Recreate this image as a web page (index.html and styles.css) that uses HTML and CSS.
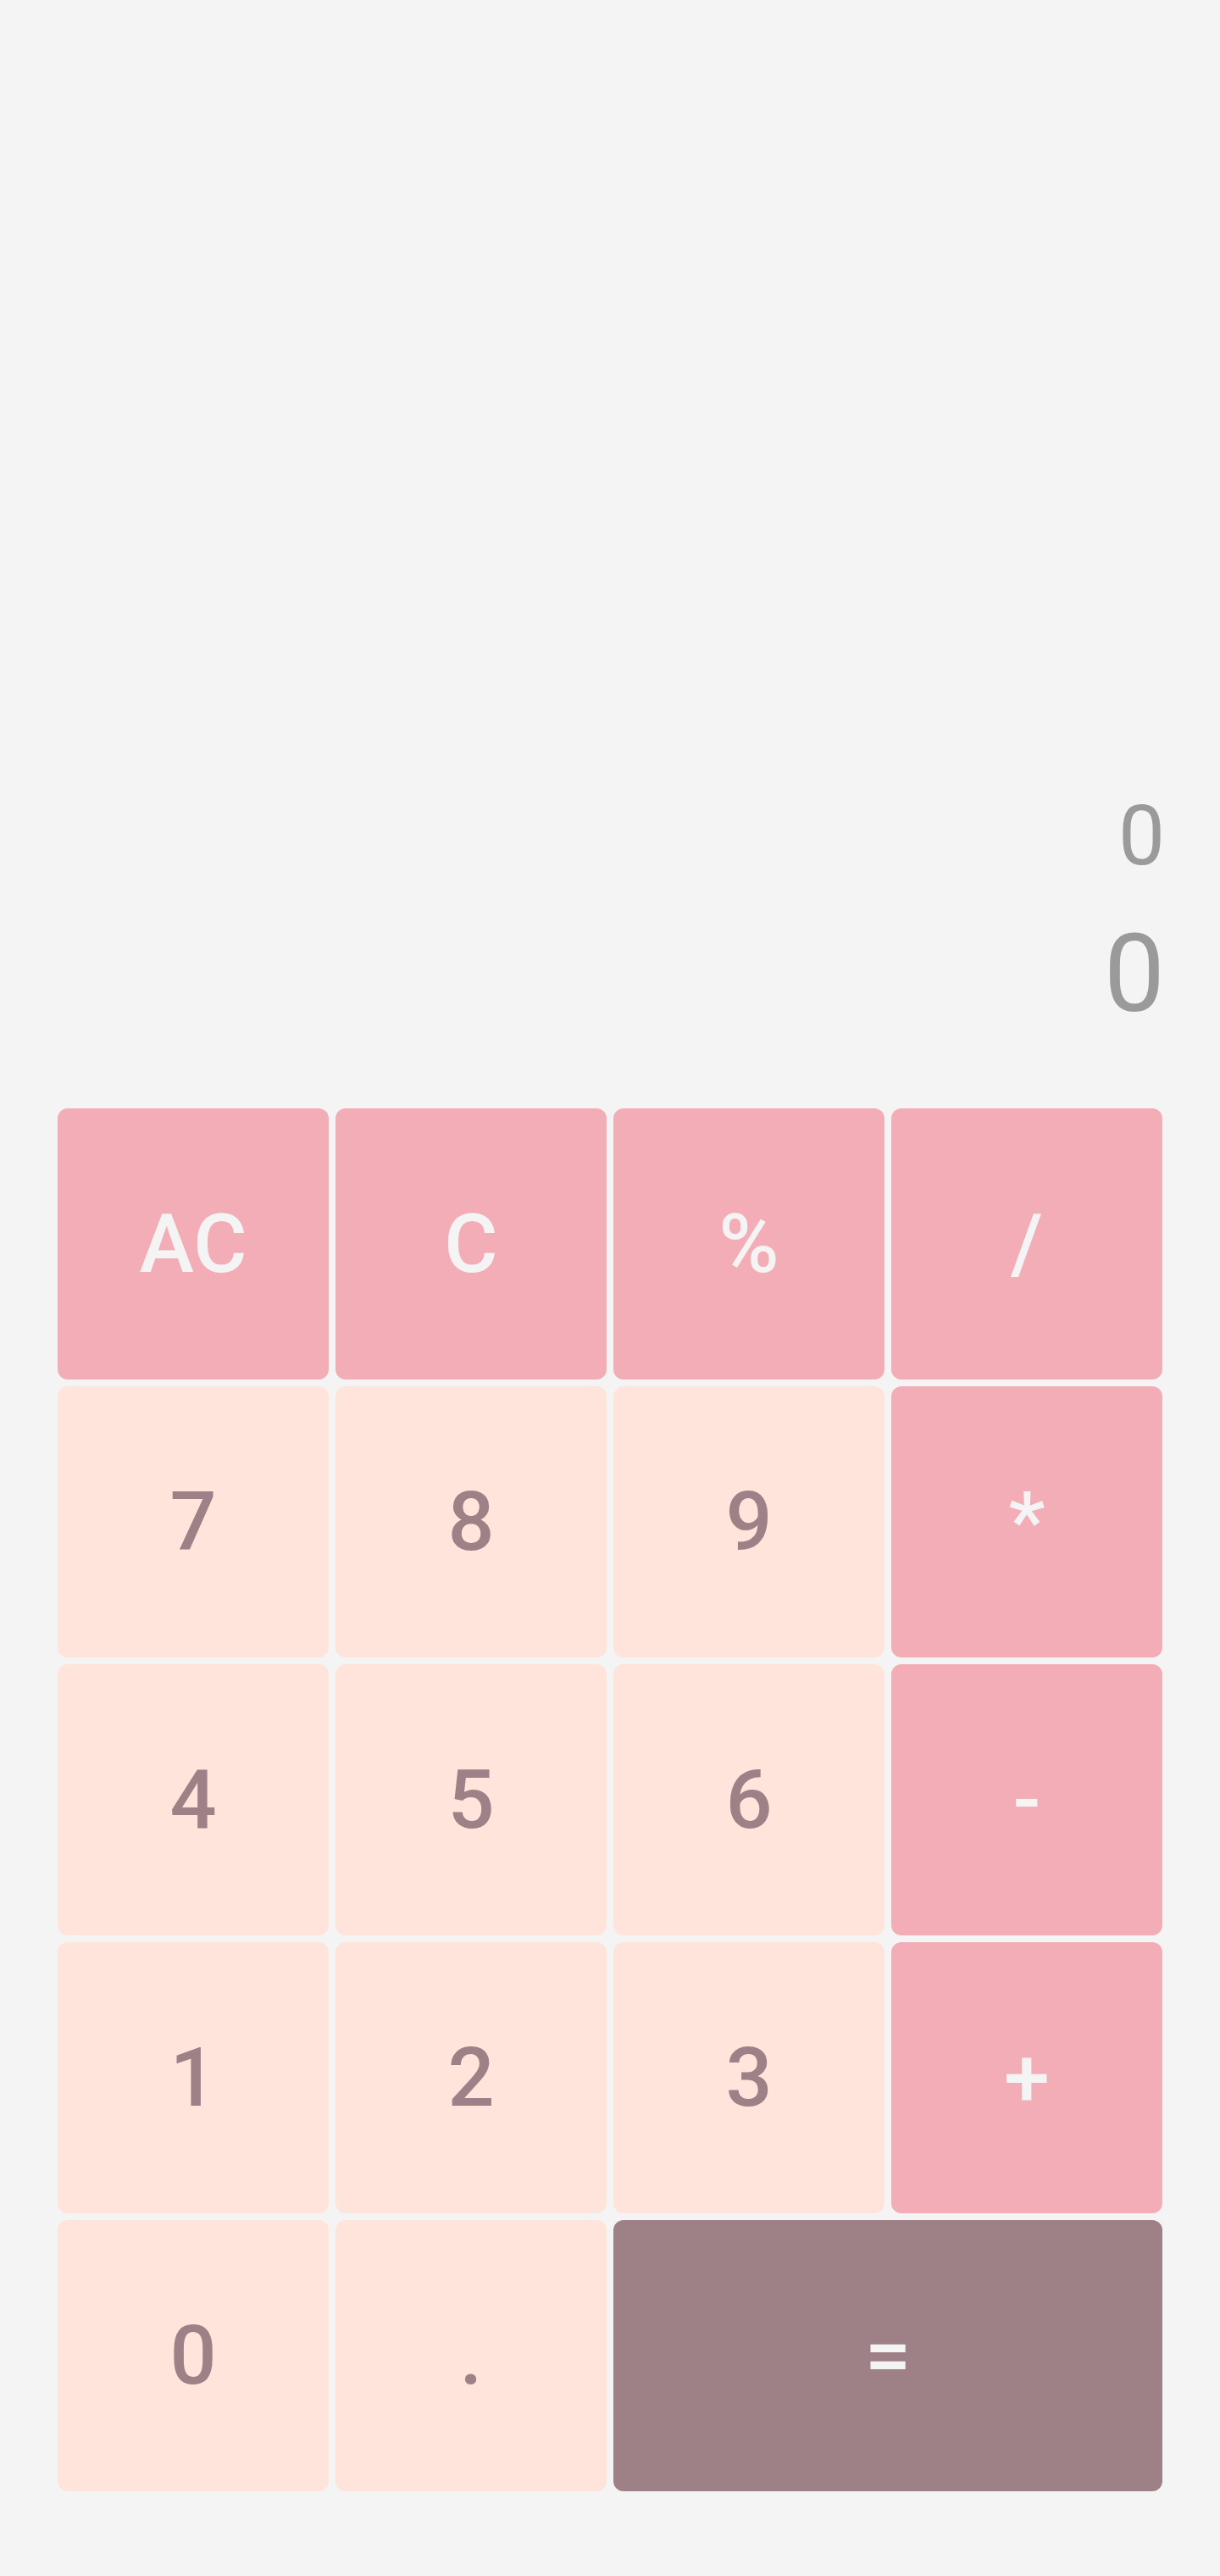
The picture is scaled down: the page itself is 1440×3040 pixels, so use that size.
FILE: index.html
```html
<!DOCTYPE html>
<html lang="en">
<head>
<meta charset="utf-8">
<title>Calculator</title>
<link rel="stylesheet" href="styles.css">
</head>
<body>
<main class="calculator">
  <section class="display">
    <div class="previous">0</div>
    <div class="current">0</div>
  </section>
  <section class="keys">
    <button class="key op">AC</button>
    <button class="key op">C</button>
    <button class="key op">%</button>
    <button class="key op">/</button>
    <button class="key num">7</button>
    <button class="key num">8</button>
    <button class="key num">9</button>
    <button class="key op">*</button>
    <button class="key num">4</button>
    <button class="key num">5</button>
    <button class="key num">6</button>
    <button class="key op">-</button>
    <button class="key num">1</button>
    <button class="key num">2</button>
    <button class="key num">3</button>
    <button class="key op">+</button>
    <button class="key num">0</button>
    <button class="key num">.</button>
    <button class="key equals">=</button>
  </section>
</main>
</body>
</html>
```
FILE: styles.css
```css
html, body {
  margin: 0;
  padding: 0;
  background: #f4f4f4;
}

body {
  font-family: Roboto, "Liberation Sans", sans-serif;
}

.calculator {
  width: 1304px;
  margin: 0 auto;
}

.display {
  height: 1308px;
  display: flex;
  flex-direction: column;
  justify-content: flex-end;
  align-items: flex-end;
  color: #9a9a9a;
  box-sizing: border-box;
  padding-bottom: 95px;
  margin-right: -3px;
}

.previous {
  font-size: 98px;
  line-height: 1;
  font-weight: 400;
  margin-bottom: 49px;
}

.current {
  font-size: 128px;
  line-height: 1;
  font-weight: 400;
}

.keys {
  display: grid;
  grid-template-columns: repeat(4, 320px);
  grid-auto-rows: 320px;
  gap: 8px;
}

.key {
  border: none;
  border-radius: 12px;
  font-family: Roboto, "Liberation Sans", sans-serif;
  font-size: 97px;
  font-weight: 500;
  padding: 0;
  margin: 0;
  cursor: pointer;
  display: flex;
  align-items: center;
  justify-content: center;
}

.op {
  background: #f3adb7;
  color: #f4f4f4;
}

.num {
  background: #fee4da;
  color: #9e8087;
}

.equals {
  grid-column: span 2;
  background: #9e8087;
  color: #f4f4f4;
}
```
